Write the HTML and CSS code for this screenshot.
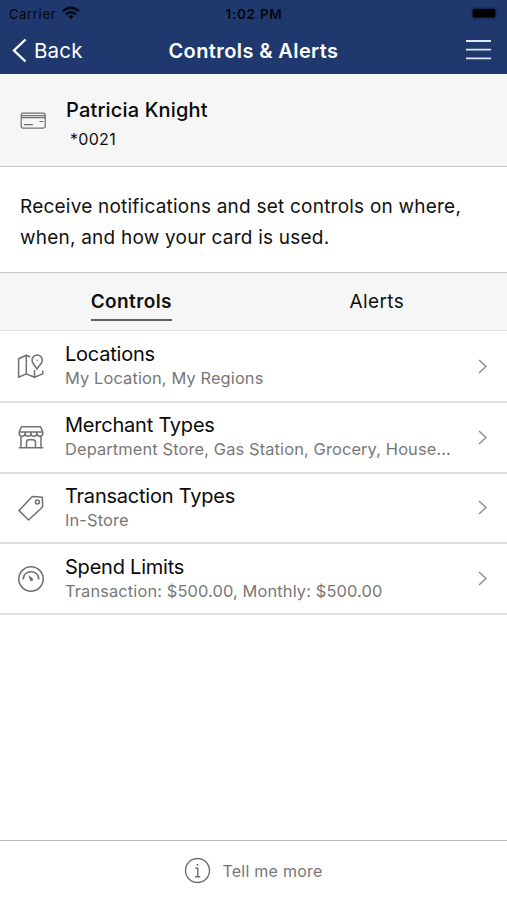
FILE: index.html
```html
<!DOCTYPE html>
<html lang="en">
<head>
<meta charset="utf-8">
<meta name="viewport" content="width=device-width, initial-scale=1">
<title>Controls &amp; Alerts</title>
<link rel="stylesheet" href="styles.css">
</head>
<body>
<div class="app">
  <header class="header">
    <div class="status">
      <div class="carrier"><span>Carrier</span>
        <svg width="18" height="14" viewBox="0 0 18 14" fill="none" stroke="#020611" stroke-width="2.4"><path d="M1 5.2Q9-1.8 17 5.2M4 8.4q5-4.2 10 0"/><path d="M6.3 10.3Q9 8.2 11.7 10.3L9 13z" fill="#020611" stroke="none"/></svg>
      </div>
      <time class="clock">1:02 PM</time>
      <svg class="battery" width="31" height="14" viewBox="0 0 31 14"><rect x="1" y=".3" width="26" height="12" rx="3" fill="none" stroke="#1a2f5c"/><rect x="2.5" y="1.7" width="23" height="9" rx="2" fill="#000"/><path d="M28.5 4.5v4q1.7-2 0-4" fill="#182b55"/></svg>
    </div>
    <nav class="navbar">
      <a class="back"><svg width="15" height="25" viewBox="0 0 15 25" fill="none" stroke="#fff" stroke-width="2.4"><path d="M13.5 1.5L2 12.5l11.5 11"/></svg><span>Back</span></a>
      <h1 class="title">Controls &amp; Alerts</h1>
      <svg class="menu" width="25" height="20" viewBox="0 0 25 20" stroke="#dfe5f2" stroke-width="1.8"><path d="M0 1h25M0 9.7h25M0 18.4h25"/></svg>
    </nav>
  </header>
  <section class="card">
    <svg width="26" height="18" viewBox="0 0 26 18" fill="none" stroke="#707070" stroke-width="1.2"><rect x="1.2" y="1.1" width="24" height="15" rx="1.8"/><path d="M1.2 3.6h24M1.2 5.6h24M4 12.6h9M19.5 9.5h4"/></svg>
    <div class="holder"><h2 class="name">Patricia Knight</h2><p class="number">*0021</p></div>
  </section>
  <p class="intro">Receive notifications and set controls on where,<br>when, and how your card is used.</p>
  <div class="tabs"><div class="tab"><span class="active">Controls</span></div><div class="tab"><span class="inactive">Alerts</span></div></div>
  <ul class="list">
    <li class="row">
      <svg class="icon" viewBox="0 0 28 28"><path d="M9.3 21.9L1.6 25.2V6.8l7.7-3.6v18.7l8.2 3.3 8.2-3.3v-3.5M9.3 3.2l4 1.8M17.5 18v7.2"/><path d="M20 17.3c-1.7-3.6-5-5.8-5-9a5 5 0 0 1 10.4 0c0 3.2-3.8 5.4-5.4 9z"/><circle cx="20.2" cy="8.3" r=".7" class="dot"/></svg>
      <div class="text"><h3 class="label">Locations</h3><p class="detail">My Location, My Regions</p></div>
      <svg class="chevron" viewBox="0 0 9 15"><path d="M1 1l7 6.5L1 14"/></svg>
    </li>
    <li class="row">
      <svg class="icon" viewBox="0 0 28 28"><path d="M4.5 3.8h19l2.3 5.2H2.2zM2.2 9v1.2c0 4 5.9 4 5.9 0 0 4 5.9 4 5.9 0 0 4 5.9 4 5.9 0 0 4 5.9 4 5.9 0V9M8.1 10V9M14 10V9M19.9 10V9M4 13v11.5M24 13v11.5M1.8 24.8h24.5M9.5 24.5v-5.2q0-2.5 2.5-2.5h4q2.5 0 2.5 2.5v5.2"/></svg>
      <div class="text"><h3 class="label">Merchant Types</h3><p class="detail">Department Store, Gas Station, Grocery, House...</p></div>
      <svg class="chevron" viewBox="0 0 9 15"><path d="M1 1l7 6.5L1 14"/></svg>
    </li>
    <li class="row">
      <svg class="icon" viewBox="0 0 28 28"><path d="M2 16.6L14.5 3.3q.7-.7 1.8-.7l9 .7.4 8.4q0 1-.7 1.8L11.6 26z"/><circle cx="20.4" cy="8" r="2"/></svg>
      <div class="text"><h3 class="label">Transaction Types</h3><p class="detail">In-Store</p></div>
      <svg class="chevron" viewBox="0 0 9 15"><path d="M1 1l7 6.5L1 14"/></svg>
    </li>
    <li class="row">
      <svg class="icon" viewBox="0 0 28 28"><circle cx="14" cy="14" r="12.2"/><path d="M6.3 14.5C5.5 4.2 22.5 4.2 21.7 14.5"/><path class="dot" d="M11.4 10l4 3.2c1.7 1.9-1 4.2-2.5 2z"/></svg>
      <div class="text"><h3 class="label">Spend Limits</h3><p class="detail">Transaction: $500.00, Monthly: $500.00</p></div>
      <svg class="chevron" viewBox="0 0 9 15"><path d="M1 1l7 6.5L1 14"/></svg>
    </li>
  </ul>
  <footer class="footer">
    <svg width="27" height="27" viewBox="0 0 27 27" fill="none" stroke="#707070" stroke-width="1.4"><circle cx="13.5" cy="13.5" r="12"/><path d="M11.3 11.2h2.5v8.3M11 19.7h5.3"/><circle cx="13.5" cy="7.8" r="1" fill="#707070" stroke="none"/></svg>
    <span>Tell me more</span>
  </footer>
</div>
</body>
</html>
```
FILE: styles.css
```css
* { box-sizing: border-box; margin: 0; padding: 0; }
body { font-family: Inter, "Liberation Sans", sans-serif; background: #fff; color: #111; }
svg { display: block; flex: none; }
.app { height: 900px; display: flex; flex-direction: column; overflow: hidden; }
.header { height: 74px; background: #1f396e; flex: none; }
.status { height: 27px; padding: 0 6px 0 9px; display: grid; grid-template-columns: 1fr auto 1fr; align-items: center; color: #020611; font-size: 13px; }
.carrier { display: flex; align-items: center; gap: 6px; letter-spacing: .65px; }
.carrier svg { margin-top: -1px; }
.clock { font-size: 13.5px; font-weight: 600; letter-spacing: .75px; margin-right: 2px; }
.battery { justify-self: end; }
.navbar { height: 46px; padding: 0 16px 0 12px; display: grid; grid-template-columns: 1fr auto 1fr; align-items: center; color: #fff; }
.back { display: flex; align-items: center; gap: 7px; font-size: 20.5px; letter-spacing: .2px; }
.title { font-size: 20px; font-weight: 600; line-height: 24px; letter-spacing: .4px; margin: 2px 0 0 4px; }
.menu { justify-self: end; }
.card { height: 93px; flex: none; background: #f6f6f6; border-bottom: 1px solid #c6c6c6; display: flex; align-items: center; padding: 2px 0 0 20px; gap: 20px; }
.holder { padding-top: 4px; }
.name { font-size: 20px; line-height: 28px; font-weight: 500; letter-spacing: .16px; color: #090909; }
.number { font-size: 16px; line-height: 24px; letter-spacing: .3px; margin: 3px 0 0 4px; }
.intro { height: 106px; flex: none; border-bottom: 1px solid #c6c6c6; padding: 25px 20px; font-size: 19px; line-height: 30.5px; letter-spacing: .22px; white-space: nowrap; }
.tabs { height: 58px; flex: none; display: grid; grid-template-columns: 1fr 1fr; background: #f6f6f6; border-bottom: 1px solid #dedede; font-size: 19px; letter-spacing: .4px; }
.tab { display: flex; justify-content: center; padding: 14px 0 0 9px; }
.tab + .tab { padding: 14px 7px 0 0; }
.active, .inactive { height: 34px; line-height: 30px; }
.active { font-weight: 600; border-bottom: 2px solid #606060; }
.list { list-style: none; padding-top: 1px; }
.row { height: 70.8px; border-bottom: 2px solid #dedede; display: flex; align-items: center; padding: 0 20px 0 17px; }
.icon { width: 28px; height: 28px; fill: none; stroke: #707070; stroke-width: 1.5; stroke-linejoin: round; }
.dot { fill: #707070; stroke: none; }
.text { flex: 1; margin: 0 0 1px 20px; white-space: nowrap; }
.label { font-size: 20px; line-height: 26px; font-weight: 400; letter-spacing: -.22px; color: #090909; }
.detail { font-size: 16.4px; line-height: 23px; letter-spacing: .13px; color: #777; }
.chevron { width: 9px; height: 15px; fill: none; stroke: #8c8c8c; stroke-width: 1.4; }
.footer { margin-top: auto; height: 60px; border-top: 1px solid #b9b9b9; display: flex; justify-content: center; align-items: center; gap: 11px; color: #777; font-size: 16px; letter-spacing: .25px; }
.footer svg { margin-top: -1px; }
```
